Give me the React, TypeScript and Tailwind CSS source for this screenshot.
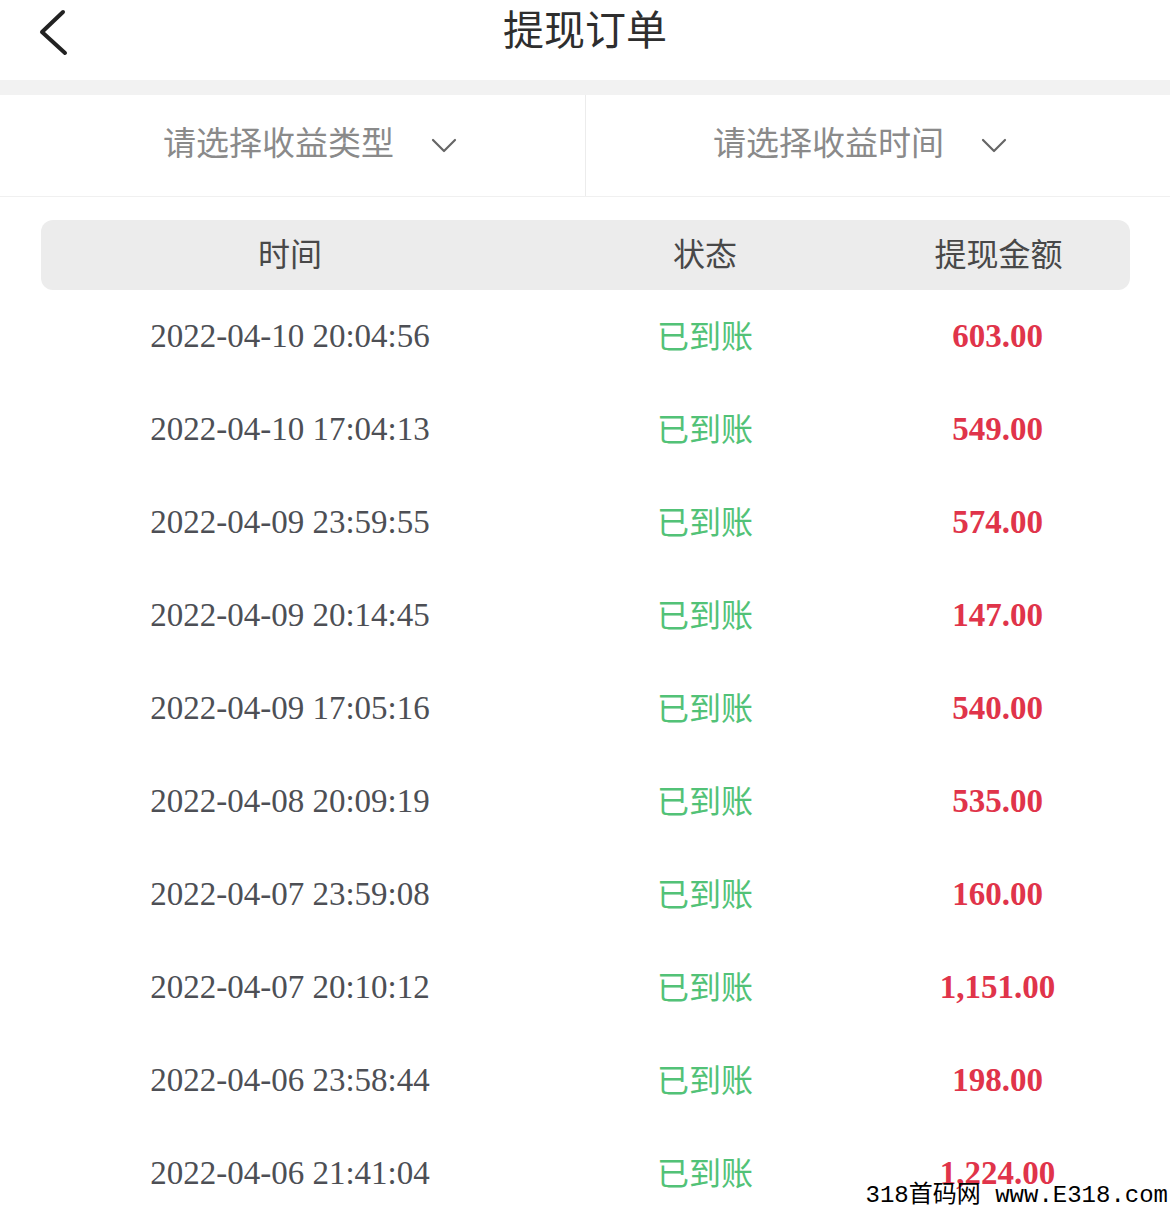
interface Order {
  time: string;
  amount: string;
}

const orders: Order[] = [
  { time: '2022-04-10 20:04:56', amount: '603.00' },
  { time: '2022-04-10 17:04:13', amount: '549.00' },
  { time: '2022-04-09 23:59:55', amount: '574.00' },
  { time: '2022-04-09 20:14:45', amount: '147.00' },
  { time: '2022-04-09 17:05:16', amount: '540.00' },
  { time: '2022-04-08 20:09:19', amount: '535.00' },
  { time: '2022-04-07 23:59:08', amount: '160.00' },
  { time: '2022-04-07 20:10:12', amount: '1,151.00' },
  { time: '2022-04-06 23:58:44', amount: '198.00' },
  { time: '2022-04-06 21:41:04', amount: '1,224.00' },
];

const cjk = "font-['Noto_Sans_CJK_SC','Noto_Sans',sans-serif]";
const serif = "font-['Liberation_Serif','Times_New_Roman',serif]";

function Chevron() {
  return (
    <svg viewBox="0 0 26 16" className="w-[26px] h-[16px]" fill="none" stroke="#666" strokeWidth="2.2" strokeLinecap="round" strokeLinejoin="round">
      <polyline points="2,2 13,13 24,2" />
    </svg>
  );
}

function Filter({ label, box }: { label: string; box: string }) {
  return (
    <button type="button" className={`flex items-center gap-[37px] h-full ${box}`}>
      <span className={`${cjk} text-[33px] text-[#8a8a8a] leading-none -mt-[8px]`}>{label}</span>
      <Chevron />
    </button>
  );
}

export default function App() {
  return (
    <div className="relative w-[1170px] h-[1211px] overflow-hidden bg-white">
      {/* header */}
      <div className="relative flex items-start justify-center h-[80px]">
        <button type="button" className="absolute left-[36px] top-[8px] w-[36px] h-[50px]" aria-label="返回">
          <svg viewBox="0 0 36 50" className="w-full h-full" fill="none" stroke="#222" strokeWidth="4" strokeLinecap="round" strokeLinejoin="round">
            <polyline points="27,4 6,24 29,45" />
          </svg>
        </button>
        <h1 className={`${cjk} text-[41px] font-normal text-[#2e2e2e] leading-[56px] -mt-[1px]`}>提现订单</h1>
      </div>

      <div className="h-[15px] bg-[#f2f2f2]" />

      {/* filters */}
      <div className="flex h-[102px] border-b border-[#f0f0f0]">
        <Filter label="请选择收益类型" box="w-[585px] shrink-0 pl-[163px]" />
        <div className="w-px shrink-0 bg-[#ececec]" />
        <Filter label="请选择收益时间" box="flex-1 pl-[127px]" />
      </div>

      {/* table */}
      <div className="mx-[41px] mt-[23px] w-[1089px]">
        <div className={`grid grid-cols-[498px_332px_1fr] items-center h-[70px] pb-[6px] rounded-[12px] bg-[#ececec] ${cjk} text-[32px] text-[#484848]`}>
          <div className="text-center">时间</div>
          <div className="text-center">状态</div>
          <div className="text-center -ml-[4px]">提现金额</div>
        </div>
        {orders.map((o) => (
          <div key={o.time} className="grid grid-cols-[498px_332px_1fr] items-center h-[93px]">
            <div className={`text-center ${serif} text-[33px] text-[#4d4f55]`}>{o.time}</div>
            <div className={`text-center ${cjk} text-[32px] text-[#52c277] -mt-[6px]`}>已到账</div>
            <div className={`text-center ${serif} text-[33px] font-bold text-[#e0344a] -ml-[6px]`}>{o.amount}</div>
          </div>
        ))}
      </div>

      {/* watermark */}
      <div className="absolute right-[2px] bottom-[0px] font-['Liberation_Mono','Noto_Sans_CJK_SC',monospace] text-[24px] leading-[30px] text-black whitespace-pre">
        318首码网 www.E318.com
      </div>
    </div>
  );
}
